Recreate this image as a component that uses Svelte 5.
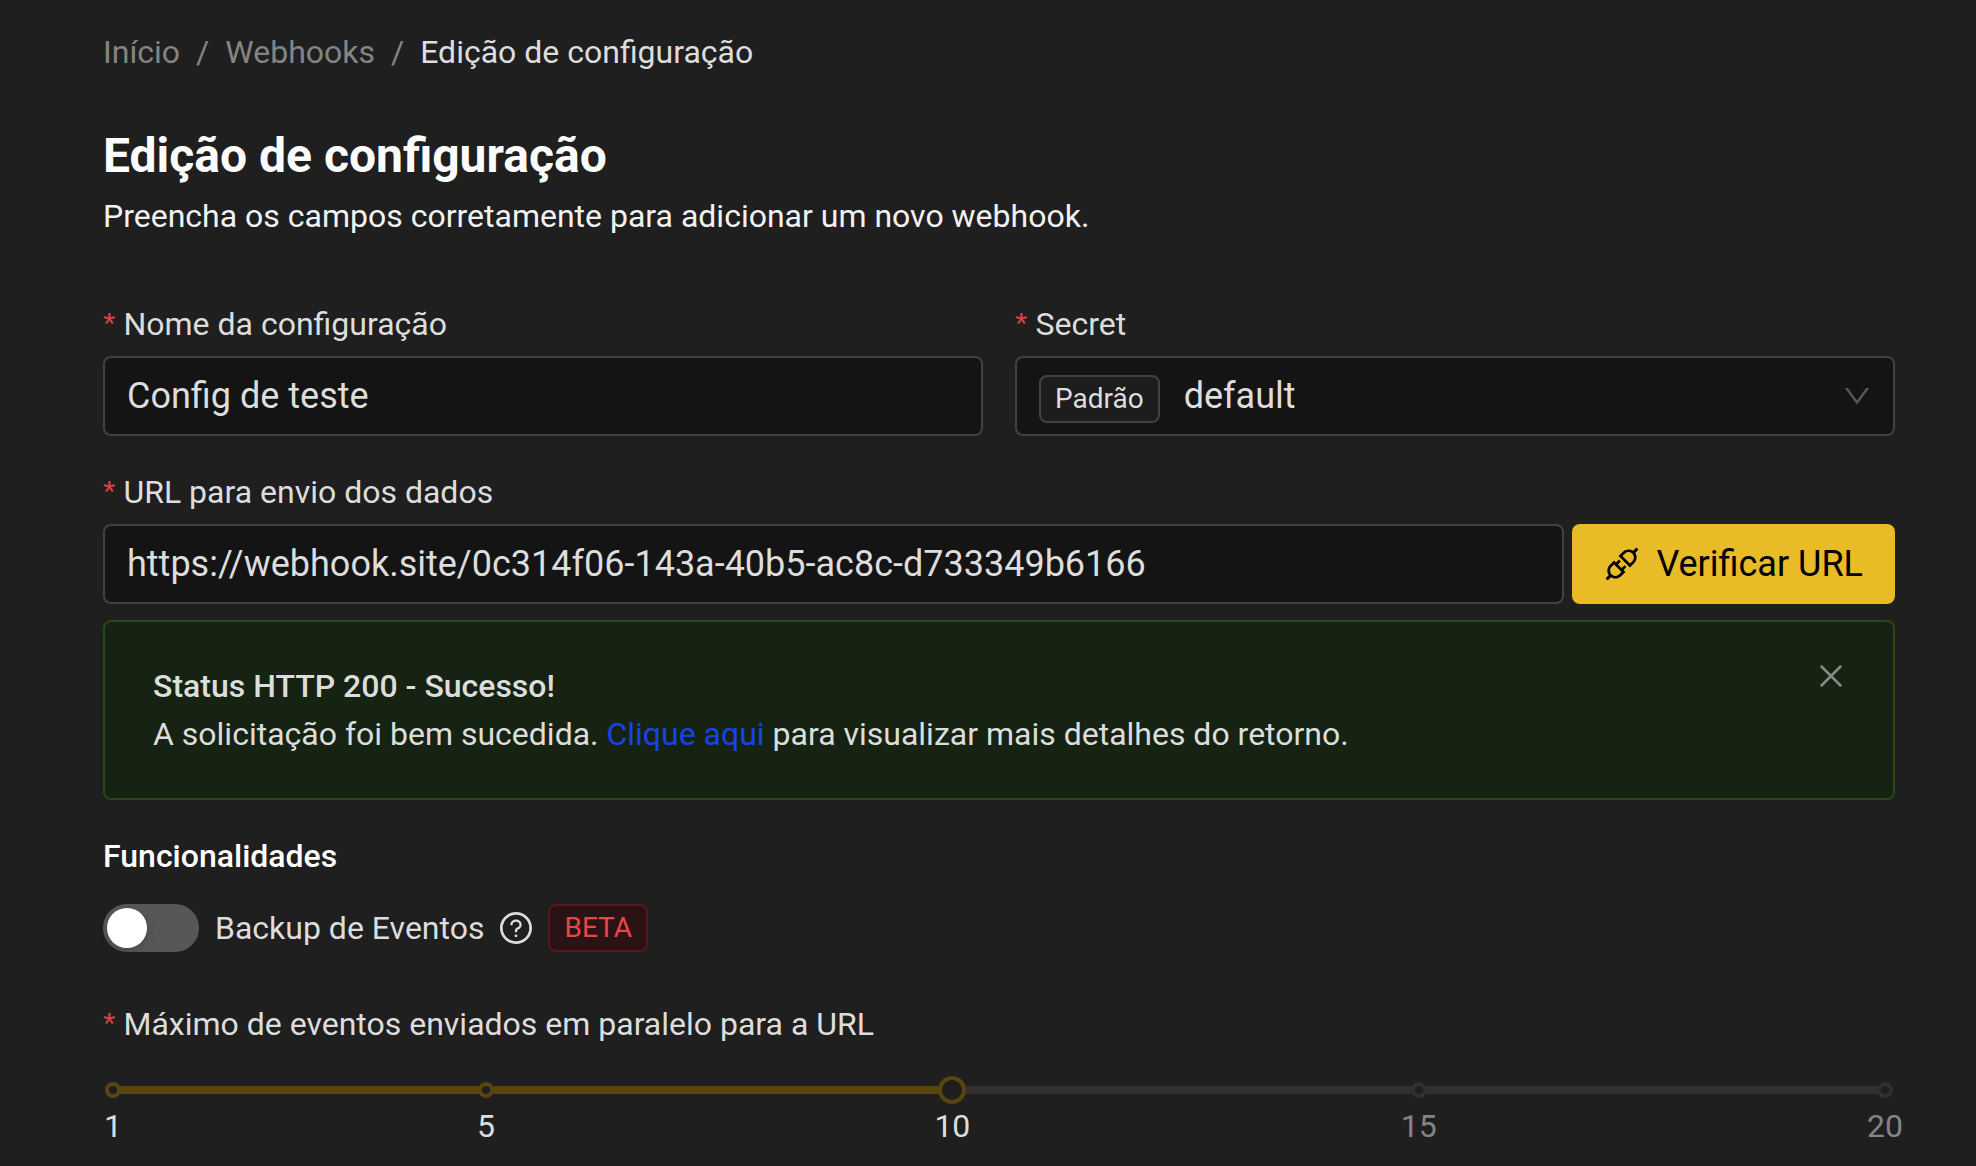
<script lang="ts">
    let name = $state('Config de teste');
    let secret = $state('default');
    let url = $state('https://webhook.site/0c314f06-143a-40b5-ac8c-d733349b6166');
    let backup = $state(false);
    let parallel = $state(10);
    let showAlert = $state(true);

    const min = 1;
    const max = 20;
    const marks = [1, 5, 10, 15, 20];

    function percent(value: number) {
        return ((value - min) / (max - min)) * 100;
    }
</script>

<main>
    <nav aria-label="breadcrumb">
        <ol>
            <li><a href="/">Início</a></li>
            <li><a href="/webhooks">Webhooks</a></li>
            <li aria-current="page">Edição de configuração</li>
        </ol>
    </nav>

    <header>
        <h1>Edição de configuração</h1>
        <p>Preencha os campos corretamente para adicionar um novo webhook.</p>
    </header>

    <form onsubmit={(e) => e.preventDefault()}>
        <div class="columns">
            <div class="field">
                <label for="name"><span class="required">*</span>Nome da configuração</label>
                <input class="box" id="name" type="text" bind:value={name} />
            </div>
            <div class="field">
                <label for="secret"><span class="required">*</span>Secret</label>
                <div class="box select">
                    <span class="tag">Padrão</span>
                    <select id="secret" bind:value={secret}>
                        <option value="default">default</option>
                    </select>
                    <svg class="arrow" viewBox="64 64 896 896" fill="currentColor" aria-hidden="true">
                        <path d="M884 256h-75c-5.100 0-9.900 2.500-12.900 6.600L512 654.200 227.900 262.600c-3-4.100-7.800-6.600-12.900-6.600h-75c-6.500 0-10.300 7.400-6.500 12.700l352.600 486.100c12.800 17.600 39 17.600 51.700 0l352.600-486.100c3.900-5.300.1-12.700-6.400-12.700z" />
                    </svg>
                </div>
            </div>
        </div>

        <div class="field">
            <label for="url"><span class="required">*</span>URL para envio dos dados</label>
            <div class="url">
                <input class="box" id="url" type="text" bind:value={url} />
                <button class="verify" type="button">
                    <svg viewBox="64 64 896 896" fill="currentColor" aria-hidden="true">
                        <path d="M917.700 148.800l-42.400-42.400c-1.600-1.600-3.600-2.300-5.700-2.300s-4.100.8-5.700 2.300l-76.100 76.100a199.270 199.270 0 00-112.100-34.300c-51.200 0-102.400 19.500-141.500 58.600L432.300 308.700a8.030 8.030 0 000 11.300L704 591.700c1.600 1.600 3.600 2.300 5.700 2.300 2 0 4.100-.8 5.700-2.300l101.900-101.900c68.900-69 77-175.700 24.300-253.500l76.100-76.100c3.100-3.200 3.100-8.300 0-11.400zM769.100 441.700l-59.400 59.400-186.800-186.800 59.400-59.400c24.900-24.900 58.100-38.700 93.400-38.700 35.300 0 68.400 13.700 93.400 38.700 24.900 24.900 38.700 58.100 38.700 93.400 0 35.300-13.800 68.400-38.700 93.400zm-190.200 105a8.030 8.030 0 00-11.300 0L501 613.300 410.700 523l66.700-66.700c3.100-3.100 3.100-8.200 0-11.300L441 408.600a8.030 8.030 0 00-11.300 0L363 475.300l-43-43a7.850 7.850 0 00-5.700-2.300c-2 0-4.100.8-5.700 2.300L206.800 534.200c-68.900 69-77 175.700-24.300 253.500l-76.100 76.100a8.030 8.030 0 000 11.300l42.400 42.400c1.600 1.600 3.600 2.300 5.700 2.300s4.100-.8 5.700-2.300l76.100-76.100c33.700 22.900 72.900 34.300 112.100 34.300 51.200 0 102.400-19.500 141.500-58.600l101.900-101.900c3.100-3.100 3.100-8.200 0-11.300l-43-43 66.700-66.700c3.100-3.100 3.100-8.200 0-11.300l-36.600-36.200zM441.700 769.100a131.320 131.320 0 01-93.400 38.700c-35.300 0-68.400-13.700-93.400-38.700a131.320 131.320 0 01-38.700-93.400c0-35.300 13.700-68.400 38.700-93.400l59.400-59.400 186.800 186.800-59.400 59.400z" />
                    </svg>
                    Verificar URL
                </button>
            </div>
        </div>

        {#if showAlert}
            <div class="alert" role="alert">
                <div class="message">
                    <strong>Status HTTP 200 - Sucesso!</strong>
                    <p>A solicitação foi bem sucedida. <a href="#retorno">Clique aqui</a> para visualizar mais detalhes do retorno.</p>
                </div>
                <button class="close" type="button" aria-label="Fechar" onclick={() => (showAlert = false)}>
                    <svg viewBox="0 0 28 28" fill="none" stroke="currentColor" stroke-width="2.500" stroke-linecap="round" aria-hidden="true">
                        <path d="M4.500 4.500l19 19M23.500 4.500l-19 19" />
                    </svg>
                </button>
            </div>
        {/if}

        <h2>Funcionalidades</h2>
        <div class="feature">
            <input class="switch" id="backup" type="checkbox" role="switch" bind:checked={backup} />
            <label for="backup">Backup de Eventos</label>
            <svg class="help" viewBox="64 64 896 896" fill="currentColor" aria-hidden="true">
                <path d="M512 64C264.600 64 64 264.600 64 512s200.600 448 448 448 448-200.600 448-448S759.400 64 512 64zm0 820c-205.400 0-372-166.600-372-372s166.600-372 372-372 372 166.600 372 372-166.600 372-372 372z" />
                <path d="M623.600 316.700C593.600 290.400 554 276 512 276s-81.600 14.500-111.600 40.700C369.200 344 352 380.700 352 420v7.600c0 4.400 3.600 8 8 8h48c4.400 0 8-3.600 8-8V420c0-44.100 43.100-80 96-80s96 35.900 96 80c0 31.100-22 59.600-56.100 72.700-21.200 8.100-39.200 22.300-52.100 40.900-13.100 19-19.900 41.800-19.900 64.900V620c0 4.400 3.600 8 8 8h48c4.400 0 8-3.600 8-8v-22.700a48.300 48.300 0 0130.900-44.800c59-22.700 97.100-74.700 97.100-132.500.1-39.300-17.100-76-48.300-103.300zM472 732a40 40 0 1080 0 40 40 0 10-80 0z" />
            </svg>
            <span class="tag beta">BETA</span>
        </div>

        <div class="field">
            <label for="parallel"><span class="required">*</span>Máximo de eventos enviados em paralelo para a URL</label>
            <div class="slider">
                <div class="rail">
                    <div class="track" style="width: {percent(parallel)}%"></div>
                </div>
                {#each marks as mark}
                    <span class="dot" class:active={mark <= parallel} style="left: {percent(mark)}%"></span>
                    <span class="mark" class:active={mark <= parallel} style="left: {percent(mark)}%">{mark}</span>
                {/each}
                <input id="parallel" type="range" {min} {max} bind:value={parallel} />
            </div>
        </div>
    </form>
</main>

<style>
    :global(body){
        margin: 0;
        background: #1f1f1f;
    }
    main{
        padding: 32px 81px 16px 103px;
        font-family: Roboto, sans-serif;
        font-size: 32px;
        line-height: 40px;
        color: #dddddd;
    }
    ol{
        display: flex;
        margin: 0;
        padding: 0;
        list-style: none;
    }
    li + li::before{
        content: '/';
        margin: 0 16px;
        color: #848484;
    }
    li a{
        color: #848484;
        text-decoration: none;
    }
    header{
        margin: 52px 0 68px;
        color: #fcfcfc;
    }
    h1{
        margin: 0;
        font-size: 48px;
        line-height: 64px;
    }
    p{
        margin: 0;
    }
    header p{
        margin-top: 8px;
        color: #f2f2f2;
    }
    .columns{
        display: grid;
        grid-template-columns: 1fr 1fr;
        gap: 32px;
        margin-bottom: 36px;
    }
    .field > label{
        display: block;
        margin-bottom: 12px;
    }
    .required{
        margin-right: 8px;
        font-family: "Liberation Sans", sans-serif;
        line-height: 1;
        color: #dc4446;
    }
    .box{
        box-sizing: border-box;
        width: 100%;
        height: 80px;
        padding: 0 22px;
        border: 2px solid #424242;
        border-radius: 8px;
        background: #141414;
        color: #dddddd;
        font-family: inherit;
        font-size: 36px;
    }
    .select{
        display: flex;
        align-items: center;
    }
    .select select{
        flex: 1;
        height: 76px;
        margin-left: 24px;
        padding: 0;
        appearance: none;
        border: none;
        background: transparent;
        color: inherit;
        font: inherit;
    }
    .select .tag{
        margin-top: 6px;
    }
    .arrow{
        width: 28px;
        height: 28px;
        color: #575757;
    }
    .tag{
        box-sizing: border-box;
        height: 48px;
        padding: 0 14px;
        border: 2px solid #424242;
        border-radius: 8px;
        background: #1d1d1d;
        font-size: 28px;
        line-height: 44px;
    }
    .url{
        display: flex;
        gap: 8px;
    }
    .url input{
        flex: 1;
        min-width: 0;
    }
    .verify{
        display: flex;
        align-items: center;
        gap: 16px;
        height: 80px;
        padding: 0 32px;
        border: none;
        border-radius: 8px;
        background: #e8bb27;
        color: #000000;
        font-family: inherit;
        font-size: 36px;
    }
    .verify svg{
        width: 36px;
        height: 36px;
    }
    .alert{
        display: flex;
        align-items: flex-start;
        margin-top: 16px;
        padding: 40px 48px;
        border: 2px solid #274916;
        border-radius: 8px;
        background: #162312;
        line-height: 48px;
    }
    .message{
        flex: 1;
    }
    .message strong{
        font-weight: 500;
    }
    .alert a{
        color: #1543e6;
        text-decoration: none;
    }
    .close{
        padding: 0;
        border: none;
        background: none;
        color: #868b84;
        line-height: 0;
    }
    .close svg{
        width: 28px;
        height: 28px;
    }
    h2{
        margin: 36px 0 28px;
        font-size: 32px;
        font-weight: 500;
        line-height: 40px;
        color: #ffffff;
    }
    .feature{
        display: flex;
        align-items: center;
        gap: 16px;
        margin-bottom: 52px;
    }
    .switch{
        width: 96px;
        height: 48px;
        margin: 0;
        appearance: none;
        border-radius: 24px;
        background: #575757;
    }
    .switch::before{
        content: '';
        display: block;
        width: 40px;
        height: 40px;
        margin: 4px;
        border-radius: 50%;
        background: #ffffff;
        box-shadow: 0 4px 8px rgba(0, 35, 11, 0.2);
    }
    .switch:checked{
        background: #e8bb27;
    }
    .switch:checked::before{
        margin-left: 52px;
    }
    .help{
        width: 32px;
        height: 32px;
    }
    .beta{
        border-color: #58181c;
        background: #2a1215;
        color: #e84749;
    }
    .slider{
        position: relative;
        height: 64px;
        margin: 42px 10px 0;
    }
    .rail{
        height: 8px;
        border-radius: 4px;
        background: #303030;
    }
    .track{
        height: 8px;
        border-radius: 4px;
        background: #594510;
    }
    .dot{
        position: absolute;
        top: -4px;
        box-sizing: border-box;
        width: 16px;
        height: 16px;
        border: 4px solid #303030;
        border-radius: 50%;
        background: #1f1f1f;
        transform: translateX(-50%);
    }
    .dot.active{
        border-color: #594510;
    }
    .mark{
        position: absolute;
        top: 20px;
        color: #848484;
        transform: translateX(-50%);
    }
    .mark.active{
        color: #dddddd;
    }
    /* the input sticks out by half a thumb on each side, so the thumb lands on the marks */
    .slider input{
        position: absolute;
        top: -10px;
        left: -14px;
        width: calc(100% + 28px);
        height: 28px;
        margin: 0;
        appearance: none;
        background: transparent;
    }
    .slider input::-webkit-slider-thumb{
        box-sizing: border-box;
        width: 28px;
        height: 28px;
        appearance: none;
        border: 4px solid #594510;
        border-radius: 50%;
        background: #1f1f1f;
    }
</style>
